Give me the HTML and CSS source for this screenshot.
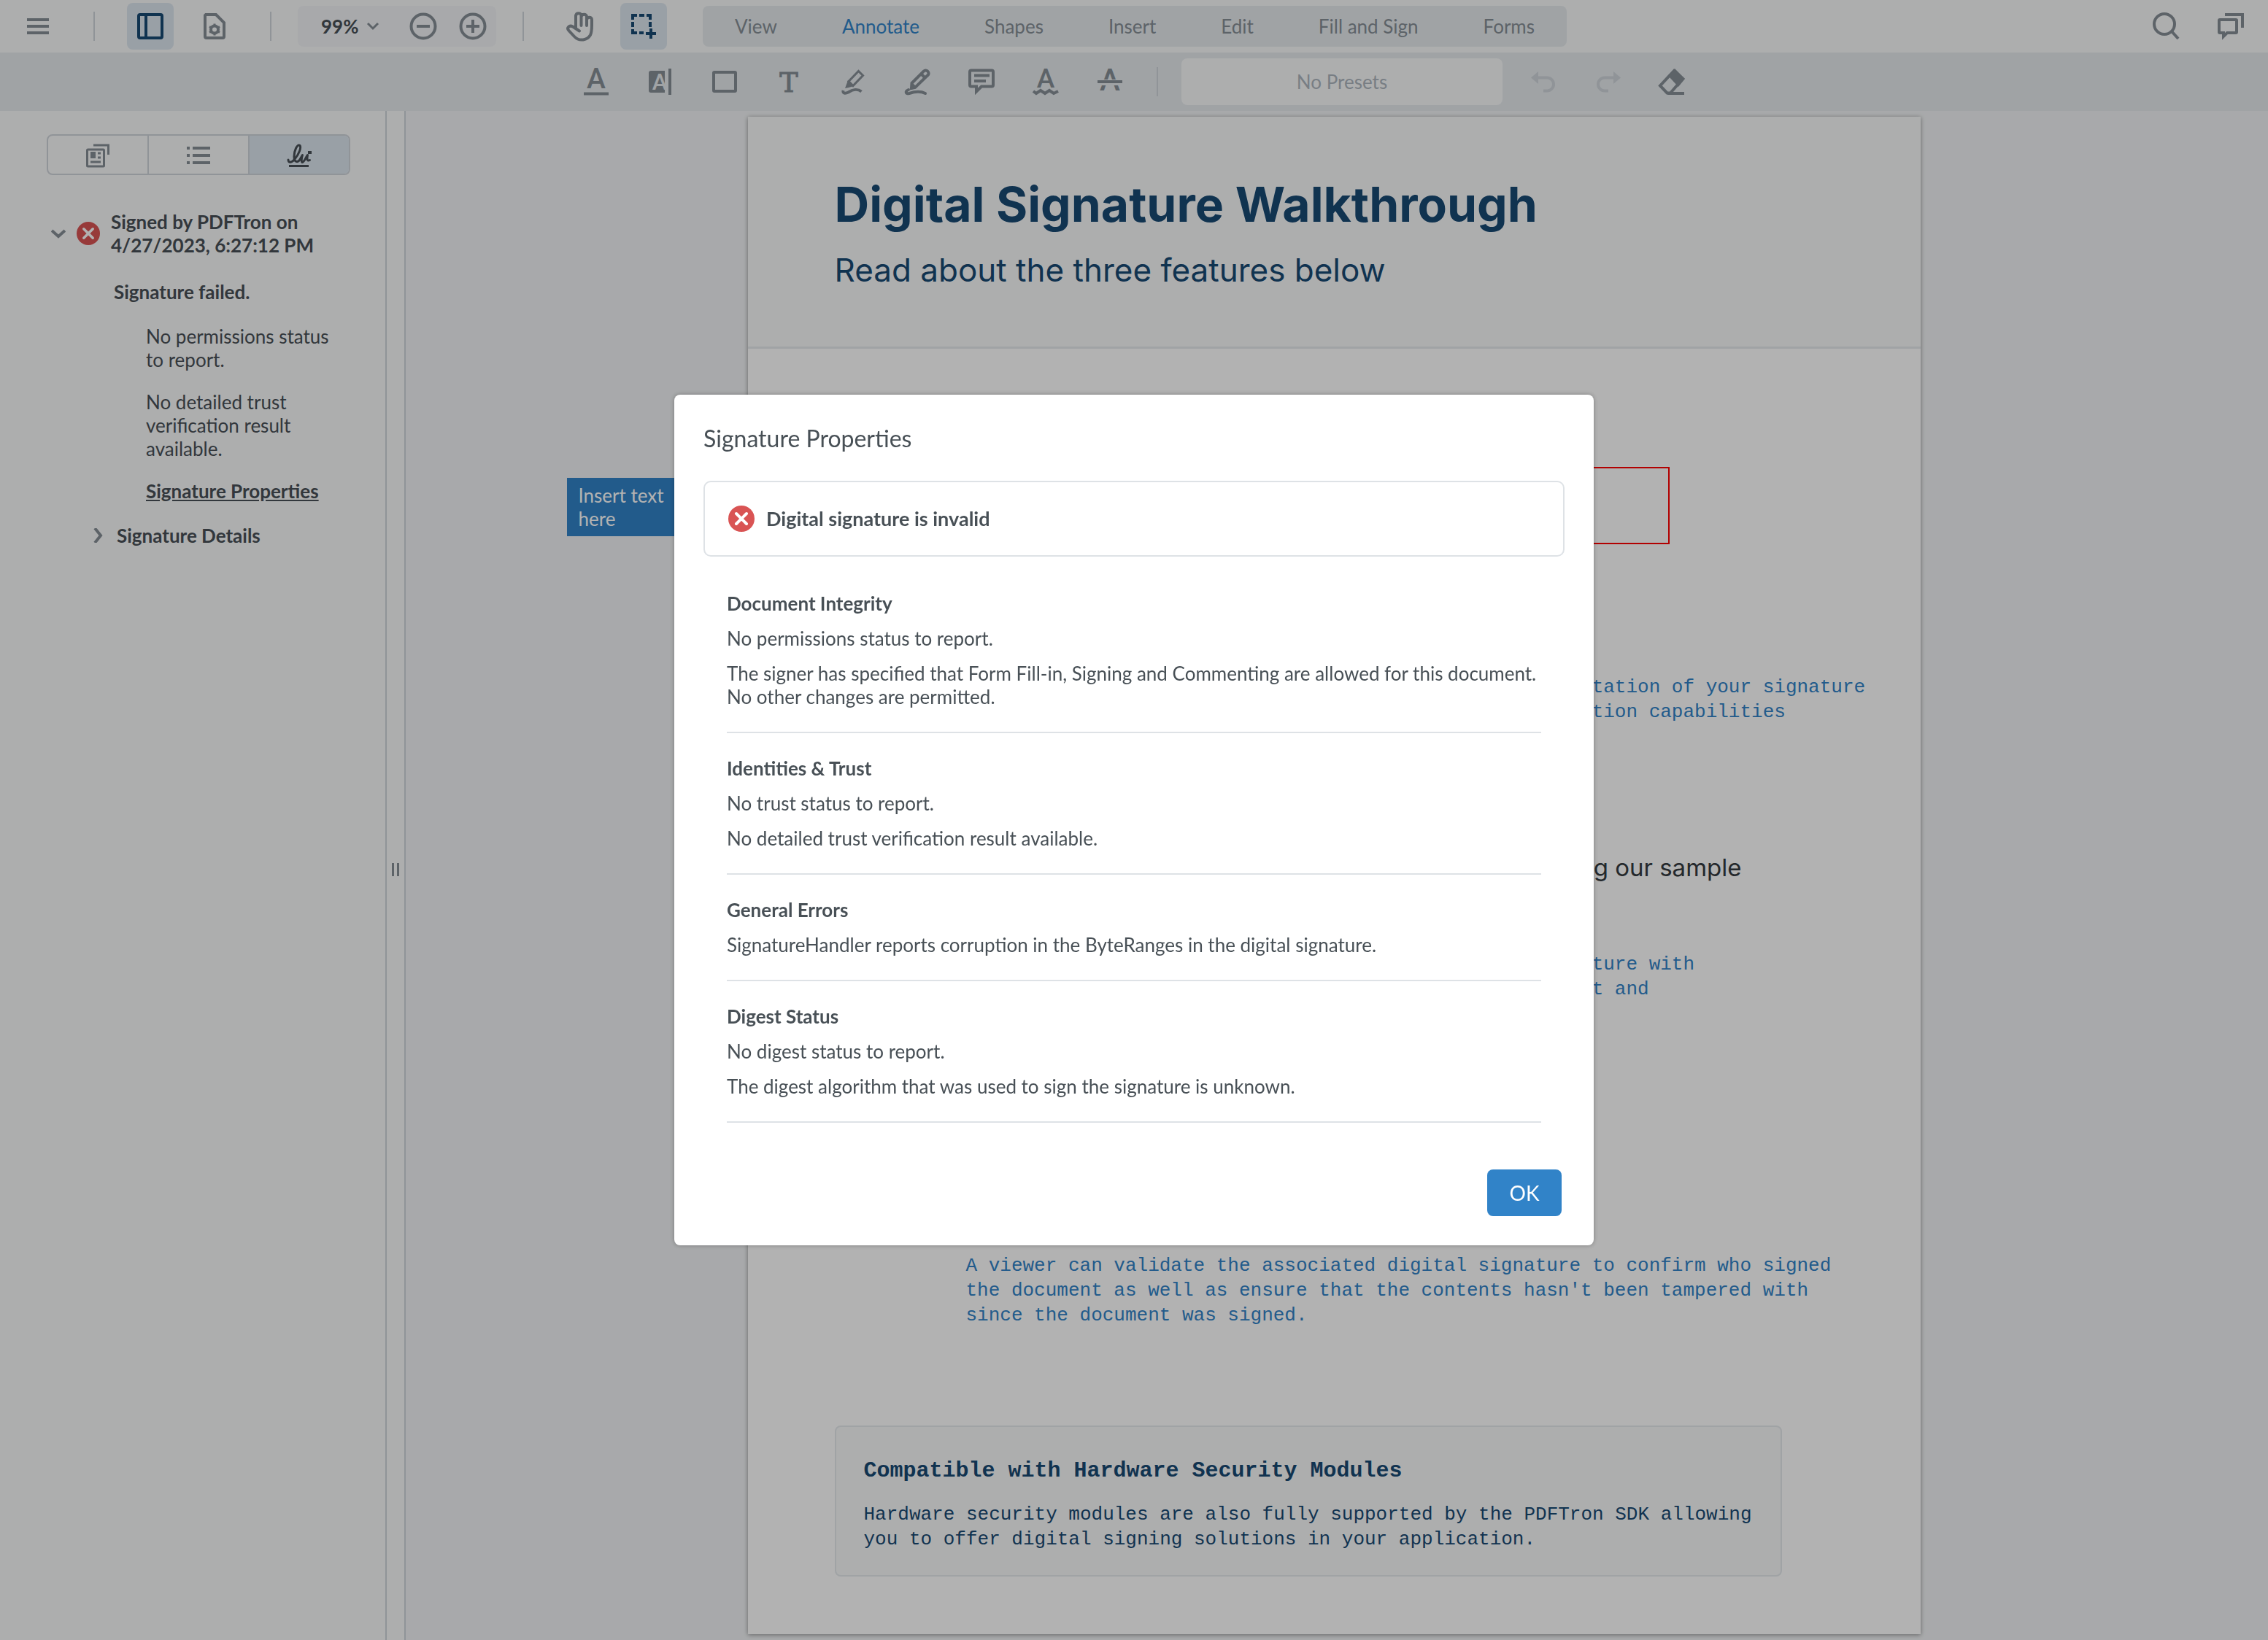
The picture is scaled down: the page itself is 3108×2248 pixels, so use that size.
FILE: index.html
```html
<!DOCTYPE html>
<html lang="en">
<head>
<meta charset="utf-8">
<meta name="viewport" content="width=device-width, initial-scale=1">
<title>Digital Signature Walkthrough</title>
<link rel="stylesheet" href="styles.css">
</head>
<body>
<div class="app">
  <header class="header">
    <div class="group group-menu">
      <button class="icon-button" type="button" aria-label="Menu"><svg class="icon" viewBox="0 0 48 48"><path d="M9 15h30M9 24h30M9 33h30"/></svg></button>
    </div>
    <span class="divider"></span>
    <div class="group">
      <button class="icon-button active" type="button" aria-label="Toggle panel"><svg class="icon" viewBox="0 0 48 48"><rect x="8" y="8" width="32" height="32" rx="2"/><path d="M18 8v32"/></svg></button>
      <button class="icon-button" type="button" aria-label="View controls"><svg class="icon" viewBox="0 0 48 48"><path d="M12 8h14l11 11v19a2 2 0 0 1-2 2H13a2 2 0 0 1-2-2V9z"/><circle cx="24" cy="28.500" r="5"/><path class="thin" d="M24 20.500v4M24 32.500v4M17 24.500l3.500 2M27.500 30.500l3.500 2M17 32.500l3.500-2M27.500 26.500l3.500-2"/></svg></button>
    </div>
    <span class="divider"></span>
    <div class="group group-zoom">
      <div class="zoom">
        <button class="zoom-level" type="button">99%<svg class="chevron" viewBox="0 0 20 20"><path class="thin" d="M3 6l7 7 7-7"/></svg></button>
        <button class="icon-button" type="button" aria-label="Zoom out"><svg class="icon" viewBox="0 0 48 48"><circle cx="24" cy="24" r="16.500"/><path d="M15 24h18"/></svg></button>
        <button class="icon-button" type="button" aria-label="Zoom in"><svg class="icon" viewBox="0 0 48 48"><circle cx="24" cy="24" r="16.500"/><path d="M15 24h18M24 15v18"/></svg></button>
      </div>
    </div>
    <span class="divider"></span>
    <div class="group">
      <button class="icon-button" type="button" aria-label="Pan"><svg class="icon" viewBox="0 0 48 48"><path class="round" d="M24 30.500l-9-6c-5-2.500-9 1.500-5.500 5.500L17 38c7 7.500 18 5 22 -2c2-4 2-8 2-14v-7c0-4.500-6.500-4.500-7 0v8M34 15v-4c0-4.500-7-4.500-7.500 0v12M26.500 11V9.500c0-4.500-7-4.500-7.500 0V27"/></svg></button>
      <button class="icon-button active" type="button" aria-label="Select"><svg class="icon" viewBox="0 0 48 48"><path d="M9 15V9h6M18 9h7M28 9h5v6M33 18v7M9 18v7M9 28v5h6M18 33h6M34 27v14M27 34h14"/></svg></button>
    </div>
    <nav class="tabs" aria-label="Toolbar groups">
      <button class="tab" type="button">View</button>
      <button class="tab selected" type="button">Annotate</button>
      <button class="tab" type="button">Shapes</button>
      <button class="tab" type="button">Insert</button>
      <button class="tab" type="button">Edit</button>
      <button class="tab" type="button">Fill and Sign</button>
      <button class="tab" type="button">Forms</button>
    </nav>
    <div class="header-end">
      <button class="icon-button" type="button" aria-label="Search"><svg class="icon" viewBox="0 0 48 48"><circle cx="22" cy="21" r="14"/><path d="M32 31l9 10"/></svg></button>
      <button class="icon-button" type="button" aria-label="Comments"><svg class="icon" viewBox="0 0 48 48"><path d="M10 15h22a1 1 0 0 1 1 1v16a1 1 0 0 1-1 1H20l-5 5v-5h-5a1 1 0 0 1-1-1V16a1 1 0 0 1 1-1zM17 8h24v18"/></svg></button>
    </div>
  </header>

  <div class="tools">
    <button class="icon-button" type="button" aria-label="Underline"><svg class="icon" viewBox="0 0 48 48"><text class="letter" x="24" y="33" font-size="39">A</text><path d="M7 40.500h34"/></svg></button>
    <button class="icon-button" type="button" aria-label="Highlight"><svg class="icon" viewBox="0 0 48 48"><path class="solid" d="M11 9h19v30H11a3 3 0 0 1-3-3V12a3 3 0 0 1 3-3z"/><svg x="8" y="9" width="22" height="30" viewBox="0 0 22 30"><text class="letter knockout" x="15" y="26" font-size="31">A</text></svg><path d="M37 6v36"/></svg></button>
    <button class="icon-button" type="button" aria-label="Rectangle"><svg class="icon" viewBox="0 0 48 48"><rect x="9" y="11" width="30" height="26" rx="1"/></svg></button>
    <button class="icon-button" type="button" aria-label="Free text"><svg class="icon" viewBox="0 0 48 48"><text class="letter serif" x="24" y="38" font-size="38">T</text></svg></button>
    <button class="icon-button" type="button" aria-label="Freehand highlight"><svg class="icon" viewBox="0 0 48 48"><path class="thin" d="M31.500 9.500l6 6L24 29.500l-6-6z"/><path class="solid" d="M17 22l8 8-7 2-5 1z"/><path d="M10.500 36c-1 5 4 4 7 2.500c6-4 13-5 18 -1"/></svg></button>
    <button class="icon-button" type="button" aria-label="Freehand"><svg class="icon" viewBox="0 0 48 48"><path d="M33 9.500c3-3.500 9 2 5.500 5.500L21 32l-5 1 .500-7zM29 13l6 6"/><path class="solid" d="M16 24l8 8-9 3z"/><path class="round" d="M12 35c-5 2-4 6.500 1 5c6-2 14-4 22 0"/></svg></button>
    <button class="icon-button" type="button" aria-label="Note"><svg class="icon" viewBox="0 0 48 48"><path d="M10 8.500h28a2 2 0 0 1 2 2v18a2 2 0 0 1-2 2H24l-7 7v-7h-7a2 2 0 0 1-2-2v-18a2 2 0 0 1 2-2zM14 15.500h21M14 23h16"/></svg></button>
    <button class="icon-button" type="button" aria-label="Squiggly"><svg class="icon" viewBox="0 0 48 48"><text class="letter" x="24" y="32" font-size="37">A</text><path d="M7 37l4 3 6-4 6 4 6-4 6 4 6-3"/></svg></button>
    <button class="icon-button" type="button" aria-label="Strikeout"><svg class="icon" viewBox="0 0 48 48"><text class="letter" x="24" y="36" font-size="42">A</text><path class="gap" d="M6 25h36"/><path d="M7 24h34"/></svg></button>
    <span class="divider"></span>
    <div class="presets">No Presets</div>
    <button class="icon-button" type="button" aria-label="Undo" disabled><svg class="icon" viewBox="0 0 48 48"><path class="solid" d="M7 18.500L17 10v17z"/><path d="M15 18.500h14a9 9 0 0 1 0 18h-5"/></svg></button>
    <button class="icon-button" type="button" aria-label="Redo" disabled><svg class="icon" viewBox="0 0 48 48"><path class="solid" d="M42 18.500L32 10v17z"/><path d="M34 18.500H20a9 9 0 0 0 0 18h5"/></svg></button>
    <button class="icon-button" type="button" aria-label="Eraser"><svg class="icon" viewBox="0 0 48 48"><path d="M27 9l12 11-17 19.500h-4.500L8 29.500z"/><path class="solid" d="M19 16l9-10 14 14-9 11z"/><path d="M18 40h23"/></svg></button>
  </div>

  <div class="body">
    <aside class="sidebar">
      <div class="panel-tabs">
        <button class="panel-tab" type="button" aria-label="Thumbnails"><svg class="icon" viewBox="0 0 48 48"><rect class="thin" x="9.500" y="17" width="23" height="23" rx="1"/><path class="thin" d="M18 11h20.500v13M24 22h4M24 28h4M14 34h14"/><path class="solid" d="M14 20h7v9h-7z"/></svg></button>
        <button class="panel-tab" type="button" aria-label="Outlines"><svg class="icon" viewBox="0 0 48 48"><path d="M16 15h24M16 25h24M16 35h24M8 15h4M8 25h4M8 35h4"/></svg></button>
        <button class="panel-tab current" type="button" aria-label="Signatures"><svg class="icon" viewBox="0 0 48 48"><path class="round thin" d="M9 31c0 5 5 4 9-1c6-7 9-16 7-18.500c-4-3-8 8-8 15c0 8 5 9 8 4l3.500-6c-1 3-2 9-.500 10c3 0 5-7 7.500-10c-1 5-1 9 3 7"/><path class="solid" d="M36 19h5v4h-5z"/><path class="thin" d="M10 39.500h27"/></svg></button>
      </div>
      <div class="signature">
        <div class="signature-head">
          <button class="twisty" type="button" aria-label="Collapse"><svg class="chevron" viewBox="0 0 20 20"><path d="M1 6l9 8 9-8"/></svg></button>
          <svg class="badge" viewBox="0 0 36 36"><circle cx="18" cy="18" r="18"/><path d="M11 11l14 14M25 11L11 25"/></svg>
          <strong>Signed by PDFTron on 4/27/2023, 6:27:12 PM</strong>
        </div>
        <strong class="signature-state">Signature failed.</strong>
        <div class="signature-notes">
          <p>No permissions status to report.</p>
          <p>No detailed trust verification result available.</p>
          <p><a href="#properties">Signature Properties</a></p>
        </div>
        <div class="signature-details">
          <button class="twisty" type="button" aria-label="Expand"><svg class="chevron" viewBox="0 0 20 20"><path d="M6 0l8 10-8 10"/></svg></button>
          <strong>Signature Details</strong>
        </div>
      </div>
    </aside>
    <div class="resizer"><span></span><span></span></div>
    <main class="viewer">
      <article class="page">
        <header class="page-head">
          <h1>Digital Signature Walkthrough</h1>
          <p>Read about the three features below</p>
        </header>
        <div class="page-body">
          <p class="code-text first">A signature field may be placed on a page as a representation of your signature<br>so that it could be combined with annotations and redaction capabilities</p>
          <h2>Certify the document by signing our sample</h2>
          <p class="code-text second">The certified document lets a user associate your signature with<br>the identity of its author and promptly lock the content and</p>
          <p class="code-text third">A viewer can validate the associated digital signature to confirm who signed<br>the document as well as ensure that the contents hasn't been tampered with<br>since the document was signed.</p>
          <section class="card">
            <h3>Compatible with Hardware Security Modules</h3>
            <p>Hardware security modules are also fully supported by the PDFTron SDK allowing<br>you to offer digital signing solutions in your application.</p>
          </section>
        </div>
        <div class="text-field">Insert text here</div>
        <div class="signature-field"></div>
      </article>
    </main>
  </div>
</div>

<div class="overlay">
  <section class="modal" id="properties" role="dialog" aria-labelledby="modal-title">
    <h2 id="modal-title">Signature Properties</h2>
    <div class="status">
      <svg class="badge" viewBox="0 0 36 36"><circle cx="18" cy="18" r="18"/><path d="M11 11l14 14M25 11L11 25"/></svg>
      <strong>Digital signature is invalid</strong>
    </div>
    <div class="facts">
      <section class="fact">
        <h3>Document Integrity</h3>
        <p>No permissions status to report.</p>
        <p>The signer has specified that Form Fill-in, Signing and Commenting are allowed for this document. No other changes are permitted.</p>
      </section>
      <section class="fact">
        <h3>Identities &amp; Trust</h3>
        <p>No trust status to report.</p>
        <p>No detailed trust verification result available.</p>
      </section>
      <section class="fact">
        <h3>General Errors</h3>
        <p>SignatureHandler reports corruption in the ByteRanges in the digital signature.</p>
      </section>
      <section class="fact">
        <h3>Digest Status</h3>
        <p>No digest status to report.</p>
        <p>The digest algorithm that was used to sign the signature is unknown.</p>
      </section>
    </div>
    <div class="modal-actions"><button class="ok" type="button">OK</button></div>
  </section>
</div>
</body>
</html>
```
FILE: styles.css
```css
:root {
  --gray-0: #f8f9fa;
  --gray-1: #f1f3f5;
  --gray-2: #e5eaed;
  --gray-3: #dee2e6;
  --gray-4: #cfd4da;
  --gray-5: #adb5bd;
  --gray-6: #868e96;
  --gray-7: #485056;
  --blue-1: #dce5ee;
  --blue-5: #3183c8;
  --navy: #184973;
  --red: #d95454;
  --sans: Lato, "Open Sans", sans-serif;
  --display: Inter, "Open Sans", sans-serif;
  --mono: "Liberation Mono", monospace;
}

* { box-sizing: border-box; }

body {
  margin: 0;
  font: 26px/32px var(--sans);
  color: var(--gray-7);
}

h1, h2, h3, p { margin: 0; }

button {
  border: 0;
  padding: 0;
  background: none;
  font: inherit;
  color: inherit;
}

.app {
  display: flex;
  flex-direction: column;
  min-height: 100vh;
}

/* Icons */
.icon { display: block; width: 48px; height: 48px; overflow: visible; fill: none; stroke: currentColor; stroke-width: 4; }
.icon .thin, .chevron .thin { stroke-width: 3; }
.icon .round { stroke-linecap: round; stroke-linejoin: round; }
.icon .solid { fill: currentColor; stroke: none; }
.icon .gap { stroke: var(--gray-2); stroke-width: 8; }
.icon .letter { fill: currentColor; stroke: none; font-family: Roboto, sans-serif; font-weight: 500; text-anchor: middle; }
.icon .knockout { fill: var(--gray-2); }
.icon .serif { font-family: "DejaVu Serif", serif; font-weight: 400; stroke: currentColor; stroke-width: 1; }

.chevron { display: block; width: 20px; height: 20px; fill: none; stroke: var(--gray-6); stroke-width: 4; }

.badge { flex: none; display: block; width: 36px; height: 36px; fill: var(--red); }
.badge path { stroke: #fff; stroke-width: 4; stroke-linecap: round; }

.icon-button {
  display: grid;
  place-items: center;
  width: 64px;
  height: 64px;
  border-radius: 8px;
  color: var(--gray-6);
}
.icon-button.active { background: var(--blue-1); color: var(--navy); }
.icon-button:disabled { color: var(--gray-4); }

/* Header */
.header {
  display: flex;
  align-items: center;
  height: 72px;
  background: var(--gray-0);
}
.group { display: flex; gap: 24px; padding: 0 44px; }
.group-menu { padding-left: 20px; }
.group-zoom { padding: 0 36px; }
.divider { width: 2px; height: 40px; background: var(--gray-4); }

.zoom {
  display: flex;
  align-items: center;
  gap: 4px;
  width: 272px;
  height: 56px;
  border-radius: 8px;
  background: var(--gray-1);
}
.zoom-level {
  display: flex;
  flex: 1;
  align-items: center;
  gap: 10px;
  padding-left: 32px;
  font-weight: 700;
}

.tabs {
  display: flex;
  gap: 1px;
  height: 56px;
  margin-left: 5px;
  border-radius: 8px;
  background: var(--gray-2);
}
.tab { padding: 0 44px; color: var(--gray-6); }
.tab.selected { color: var(--blue-5); }

.header-end { display: flex; gap: 24px; margin-left: auto; padding-right: 20px; }

/* Annotation tools */
.tools {
  display: flex;
  align-items: center;
  justify-content: center;
  gap: 24px;
  height: 80px;
  background: var(--gray-2);
}
.tools .divider { margin: 0 8px; }
.presets {
  width: 440px;
  border-radius: 8px;
  background: var(--gray-0);
  color: var(--gray-5);
  line-height: 64px;
  text-align: center;
}

/* Body */
.body { display: flex; flex: 1; }

.sidebar {
  flex: none;
  width: 528px;
  padding: 32px 48px 32px 64px;
  background: var(--gray-0);
}
.panel-tabs {
  display: flex;
  height: 56px;
  border: 2px solid var(--gray-4);
  border-radius: 8px;
  overflow: hidden;
}
.panel-tab { display: grid; flex: 1; place-items: center; color: var(--gray-6); }
.panel-tab + .panel-tab { border-left: 2px solid var(--gray-4); }
.panel-tab.current { background: var(--blue-1); color: var(--gray-7); }

.signature { padding-top: 48px; }
.signature-head { display: flex; align-items: center; gap: 15px; padding-left: 6px; }
.signature-head .badge { width: 32px; height: 32px; }
.signature-state { display: block; margin: 32px 0 29px 92px; }
.signature-notes { display: grid; gap: 26px; padding-left: 136px; }
.signature-notes a { color: inherit; font-weight: 700; }
.signature-details { display: flex; align-items: center; gap: 16px; margin-top: 29px; padding-left: 60px; }

.resizer {
  display: flex;
  flex: none;
  align-items: center;
  justify-content: center;
  gap: 4px;
  width: 28px;
  padding-bottom: 16px;
  border: solid var(--gray-4);
  border-width: 0 2px;
  background: var(--gray-0);
}
.resizer span { width: 3px; height: 18px; background: var(--gray-6); }

.viewer {
  flex: 1;
  padding: 8px 8px 8px 0;
  background: var(--gray-1);
}

/* Document page */
.page {
  position: relative;
  max-width: 1607px;
  min-height: 2080px;
  margin: 0 auto;
  background: #fff;
  box-shadow: 0 1px 6px rgba(0, 0, 0, .4);
  color: var(--navy);
}
.page-head {
  padding: 76px 119px 71px;
  border-bottom: 3px solid var(--gray-2);
  background: var(--gray-0);
  font-family: var(--display);
}
.page-head h1 { font-size: 66px; line-height: 88px; }
.page-head p { margin-top: 12px; font-size: 44px; line-height: 68px; }
.page-body { padding: 447px 119px 77px; }
.page-body h2 {
  margin: 172px 126px 92px 0;
  color: #343a40;
  font: 400 33px/48px var(--display);
  text-align: right;
}
.code-text { padding-left: 180px; color: var(--blue-5); font: 26px/34px var(--mono); white-space: nowrap; }
.third { margin-top: 345px; }

.card {
  max-width: 1298px;
  margin-top: 134px;
  padding: 40px 38px 32px;
  border: 2px solid var(--gray-2);
  border-radius: 8px;
  background: var(--gray-0);
}
.card h3 { font: 700 30px/40px var(--mono); }
.card p { margin-top: 23px; font: 26px/34px var(--mono); white-space: nowrap; }

/* Form fields placed freely over the document */
.text-field {
  position: absolute;
  top: 495px;
  left: -248px;
  width: 160px;
  padding: 8px 16px;
  background: var(--blue-5);
  color: #fff;
}
.signature-field {
  position: absolute;
  top: 480px;
  right: 344px;
  width: 600px;
  height: 106px;
  border: 2px solid #f00;
}

/* Dialog */
.overlay {
  position: fixed;
  inset: 0;
  display: grid;
  place-items: center;
  background: rgba(0, 0, 0, .3);
}
.modal {
  width: 1260px;
  max-width: 100%;
  padding: 40px;
  border-radius: 8px;
  background: #fff;
  box-shadow: 0 0 6px rgba(0, 0, 0, .3);
}
.modal h2 { font-size: 32px; font-weight: 400; line-height: 40px; }
.status {
  display: flex;
  align-items: center;
  gap: 16px;
  margin-top: 38px;
  height: 104px;
  padding: 0 32px;
  border: 2px solid var(--gray-3);
  border-radius: 10px;
  font-size: 27px;
}
.facts { padding: 16px 32px 0; }
.fact {
  display: grid;
  gap: 16px;
  padding: 32px 0;
  border-bottom: 2px solid var(--gray-3);
}
.fact h3 { font-size: 26px; }
.modal-actions { display: flex; justify-content: flex-end; margin-top: 64px; padding-right: 4px; }
.ok {
  width: 102px;
  height: 64px;
  border-radius: 8px;
  background: var(--blue-5);
  color: #fff;
  font-size: 28px;
}
```
